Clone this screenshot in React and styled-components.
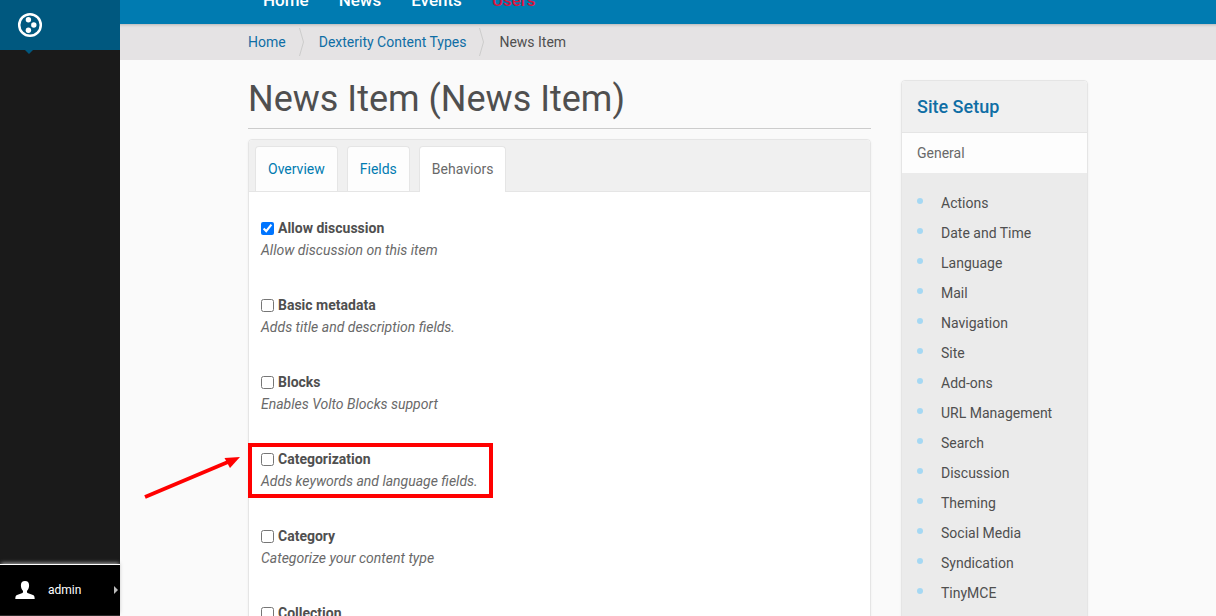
import React from "react";
import styled, { createGlobalStyle } from "styled-components";

const GlobalStyle = createGlobalStyle`
  *, *::before, *::after { box-sizing: border-box; }
  body {
    margin: 0;
    background: #fafafa;
    color: #4f4f4f;
    font-family: Roboto, "Liberation Sans", sans-serif;
    font-size: 14px;
    line-height: 22px;
  }
  a { color: inherit; text-decoration: none; }
`;

const Page = styled.div`
  display: flex;
  height: 100vh;
  overflow: hidden;
`;

const Toolbar = styled.aside`
  display: flex;
  flex: 0 0 120px;
  flex-direction: column;
  justify-content: space-between;
  background: #1a1a1a;
`;

const LogoLink = styled.a`
  position: relative;
  display: flex;
  height: 50px;
  padding: 12px 17px;
  background: #00587f;

  &::after {
    content: "";
    position: absolute;
    top: 100%;
    left: 25px;
    border: 4px solid transparent;
    border-top-color: #00587f;
    border-bottom: 0;
  }
`;

const UserButton = styled.button`
  display: flex;
  align-items: center;
  height: 52px;
  padding: 0 2px 0 15px;
  border: 0;
  border-top: 1px solid #fff;
  border-bottom: 1px solid #2a2a2a;
  background: #000;
  box-shadow: 0 -2px 4px -1px #aaa;
  color: #fff;
  font: inherit;
  font-size: 12px;
  text-align: left;
`;

const UserName = styled.span`
  flex: 1;
  padding-left: 13px;
`;

const Main = styled.div`
  flex: 1;
  min-width: 0;
`;

const Container = styled.div`
  width: 100%;
  max-width: 840px;
  margin: 0 auto;
`;

const NavBar = styled.nav`
  position: relative;
  height: 24px;
  overflow: hidden;
  background: #007bb1;
`;

const NavList = styled(Container)`
  display: flex;
  gap: 30px;
  margin-top: -11px;
  padding-left: 15px;
  color: #fff;
  font-size: 17px;
  font-weight: 500;
`;

const NavLink = styled.a`
  color: ${(p) => (p.$alert ? "#dc143c" : "#fff")};
`;

const Trail = styled.nav`
  background: #e5e3e4;
  box-shadow: inset 0 4px 3px -3px #b5b5b5;
`;

const TrailList = styled(Container)`
  display: flex;
  align-items: center;
  height: 36px;
`;

const TrailLink = styled.a`
  color: #0f6ea5;
`;

const TrailArrow = styled.svg`
  margin: 0 14px 0 13px;
`;

const Columns = styled(Container)`
  display: grid;
  grid-template-columns: minmax(0, 1fr) 187px;
  gap: 30px;
  align-items: start;
  padding-top: 20px;
`;

const Title = styled.h1`
  margin: 0 0 10px;
  padding-bottom: 10px;
  border-bottom: 1px solid #ccc;
  font-size: 36px;
  font-weight: 400;
  line-height: 38px;
`;

const Panel = styled.section`
  border: 1px solid #e5e5e5;
  border-radius: 4px;
  background: #fff;
  box-shadow: 0 1px 3px rgba(0, 0, 0, 0.05);
`;

const Tabs = styled.nav`
  display: flex;
  gap: 9px;
  padding: 6px 6px 0;
  border-bottom: 1px solid #e5e5e5;
  border-radius: 4px 4px 0 0;
  background: #f0f0f0;
`;

const Tab = styled.a`
  height: ${(p) => (p.$active ? "46px" : "45px")};
  margin-bottom: ${(p) => (p.$active ? "-1px" : "0")};
  padding: 0 12px;
  border: 1px solid #e5e5e5;
  border-bottom: 0;
  border-radius: 4px 4px 0 0;
  background: ${(p) => (p.$active ? "#fff" : "#fdfdfd")};
  color: ${(p) => (p.$active ? "#696969" : "#007bb1")};
  line-height: 45px;
`;

const Behaviors = styled.form`
  display: flex;
  flex-direction: column;
  gap: 33px;
  padding: 25px 12px;
`;

const Field = styled.div`
  position: relative;
`;

const Label = styled.label`
  display: flex;
  align-items: center;
  gap: 4px;
  font-weight: 700;
`;

const Checkbox = styled.input`
  width: 13px;
  height: 13px;
  margin: 0;
`;

const Help = styled.p`
  margin: 0;
  color: #696969;
  font-style: italic;
`;

const Highlight = styled.div`
  position: absolute;
  top: -5px;
  left: -13px;
  width: 245px;
  height: 55px;
  border: 4px solid #f00;
  pointer-events: none;
`;

const Arrow = styled.svg`
  position: absolute;
  top: 4px;
  left: -121px;
  pointer-events: none;
`;

const PortletTitle = styled.h2`
  margin: 0;
  padding: 0 15px;
  border-bottom: 1px solid #e5e5e5;
  border-radius: 4px 4px 0 0;
  background: #f0f0f0;
  color: #0f6ea5;
  font-size: 18px;
  font-weight: 500;
  line-height: 51px;
`;

const GroupTitle = styled.h3`
  margin: 0;
  padding: 0 15px;
  background: #fdfdfd;
  color: #696969;
  font-size: 14px;
  font-weight: 400;
  line-height: 40px;
`;

const SetupList = styled.ul`
  margin: 0;
  padding: 15px;
  background: #ebebeb;
  line-height: 30px;
  list-style: none;
`;

const SetupItem = styled.li`
  display: flex;
  gap: 18px;

  &::before {
    content: "";
    width: 6px;
    height: 6px;
    margin-top: 10px;
    border-radius: 50%;
    background: #a5d8f3;
  }
`;

const behaviors = [
  { id: "discussion", name: "Allow discussion", help: "Allow discussion on this item", on: true },
  { id: "basic", name: "Basic metadata", help: "Adds title and description fields." },
  { id: "blocks", name: "Blocks", help: "Enables Volto Blocks support" },
  { id: "categorization", name: "Categorization", help: "Adds keywords and language fields.", marked: true },
  { id: "category", name: "Category", help: "Categorize your content type" },
  { id: "collection", name: "Collection", help: "Adds collection behavior" },
];

const setupItems = [
  "Actions", "Date and Time", "Language", "Mail", "Navigation", "Site", "Add-ons",
  "URL Management", "Search", "Discussion", "Theming", "Social Media", "Syndication", "TinyMCE",
];

function Separator() {
  return (
    <TrailArrow width="6" height="28" viewBox="0 0 6 28" fill="none" aria-hidden="true">
      <path d="M.5 0 4.5 14 .5 28" stroke="#ccc" />
    </TrailArrow>
  );
}

function Behavior({ id, name, help, on, marked }) {
  return (
    <Field>
      <Label htmlFor={id}>
        <Checkbox type="checkbox" id={id} defaultChecked={on} aria-describedby={`${id}-help`} />
        {name}
      </Label>
      <Help id={`${id}-help`}>{help}</Help>
      {marked && (
        <>
          <Highlight />
          <Arrow width="100" height="50" viewBox="0 0 100 50" aria-hidden="true">
            <path d="M5 45 88 10" stroke="#f00" strokeWidth="3.8" />
            <path d="M100 5 84.5 6 90 16Z" fill="#f00" />
          </Arrow>
        </>
      )}
    </Field>
  );
}

export default function App() {
  return (
    <>
      <GlobalStyle />
      <Page>
        <Toolbar>
          <LogoLink href="#" aria-label="Plone">
            <svg width="26" height="26" viewBox="0 0 26 26" aria-hidden="true">
              <circle cx="13" cy="13" r="10.8" fill="none" stroke="#fff" strokeWidth="2.5" />
              <circle cx="11.4" cy="7.8" r="2.7" fill="#fff" />
              <circle cx="16.8" cy="13" r="2.7" fill="#fff" />
              <circle cx="11.4" cy="18.2" r="2.7" fill="#fff" />
            </svg>
          </LogoLink>
          <UserButton type="button">
            <svg width="20" height="18" viewBox="0 0 20 18" fill="#fff" aria-hidden="true">
              <path d="M10 0C7.3 0 5.9 1.6 5.9 4.2c0 2.5.8 4.3 2 5.5.3.4.2 1.8-.4 2.2L2 14C.7 14.5.4 15.6.3 18h19.4c-.1-2.4-.4-3.5-1.7-4l-5.5-2.1c-.6-.4-.7-1.8-.4-2.2 1.2-1.2 2-3 2-5.5C14.1 1.6 12.7 0 10 0Z" />
            </svg>
            <UserName>admin</UserName>
            <svg width="4" height="8" viewBox="0 0 4 8" aria-hidden="true">
              <path d="M0 0 4 4 0 8Z" fill="#bbb" />
            </svg>
          </UserButton>
        </Toolbar>
        <Main>
          <NavBar aria-label="Sections">
            <NavList>
              <NavLink href="#">Home</NavLink>
              <NavLink href="#">News</NavLink>
              <NavLink href="#">Events</NavLink>
              <NavLink href="#" $alert>Users</NavLink>
            </NavList>
          </NavBar>
          <Trail aria-label="Breadcrumb">
            <TrailList>
              <TrailLink href="#">Home</TrailLink>
              <Separator />
              <TrailLink href="#">Dexterity Content Types</TrailLink>
              <Separator />
              <span>News Item</span>
            </TrailList>
          </Trail>
          <Columns>
            <main>
              <Title>News Item (News Item)</Title>
              <Panel>
                <Tabs aria-label="Content type">
                  <Tab href="#">Overview</Tab>
                  <Tab href="#">Fields</Tab>
                  <Tab href="#" $active>Behaviors</Tab>
                </Tabs>
                <Behaviors>
                  {behaviors.map((b) => <Behavior key={b.id} {...b} />)}
                </Behaviors>
              </Panel>
            </main>
            <Panel as="aside">
              <PortletTitle><a href="#">Site Setup</a></PortletTitle>
              <GroupTitle>General</GroupTitle>
              <SetupList>
                {setupItems.map((item) => (
                  <SetupItem key={item}><a href="#">{item}</a></SetupItem>
                ))}
              </SetupList>
            </Panel>
          </Columns>
        </Main>
      </Page>
    </>
  );
}
